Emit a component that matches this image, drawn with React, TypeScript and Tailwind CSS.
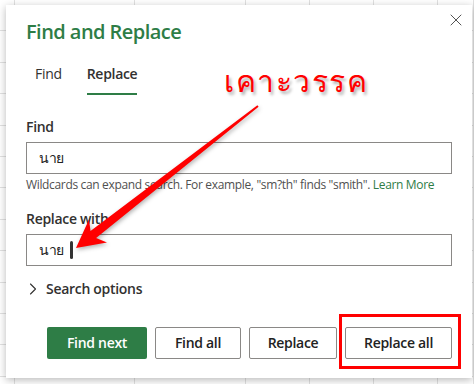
import { ChevronRight, X } from "lucide-react";

const cols = [15, 120, 111, 64, 64, 64, 36];

const Sheet = () => (
  <div className="absolute inset-0 flex bg-white bg-[repeating-linear-gradient(to_bottom,transparent_0,transparent_30.4px,#e1e1e1_30.4px,#e1e1e1_31.4px)]">
    {cols.map((w, i) => (
      <div key={i} className="h-full shrink-0 border-r border-[#e1e1e1]" style={{ width: w }} />
    ))}
  </div>
);

const Arrow = () => (
  <svg
    className="pointer-events-none absolute left-0 top-0 drop-shadow-[1px_2px_2px_rgba(0,0,0,0.3)]"
    width="474"
    height="384"
    viewBox="0 0 474 384"
  >
    <polygon
      points="258.6,106.8 96.1,238 107,242.5 76,248 89,219.5 90.5,231 257.4,105.2"
      fill="#ff0000"
    />
  </svg>
);

export default function App() {
  return (
    <div className="relative h-[384px] w-[474px] overflow-hidden font-['Open_Sans',sans-serif] tracking-[-0.3px]">
      <Sheet />

      <div className="absolute left-[6px] top-[5px] flex h-[373px] w-[466px] flex-col bg-white px-5 shadow-[0_2px_8px_rgba(0,0,0,0.28)]">
        <button className="absolute right-[6px] top-[5px] text-[#444]">
          <X className="h-5 w-5" strokeWidth={1.1} />
        </button>

        <div className="mt-[15px] flex h-6 items-center text-[20px] font-semibold tracking-[-0.55px] text-[#2e7d46]">
          Find and Replace
        </div>

        <div className="mt-[20px] flex gap-2 text-sm text-[#323130]">
          <div className="flex flex-col px-[9px]">
            <span className="h-5 leading-5">Find</span>
            <span className="mt-[9px] h-[2px]" />
          </div>
          <div className="flex flex-col px-[8px]">
            <span className="h-5 font-semibold leading-5">Replace</span>
            <span className="mt-[9px] h-[2px] bg-[#2e7d46]" />
          </div>
        </div>

        <div className="mt-[22px] h-5 text-sm font-semibold leading-5 text-[#323130]">Find</div>
        <div className="mt-[5px] flex h-8 items-center border border-[#8a8886] px-[12px] text-sm text-[#222]">
          นาย
        </div>
        <div className="mt-[3px] h-4 whitespace-nowrap text-xs leading-4 tracking-[-0.34px] text-[#505050]">
          Wildcards can expand search. For example, "sm?th" finds "smith".{" "}
          <span className="text-[#2e7d46]">Learn More</span>
        </div>

        <div className="mt-[16px] h-5 text-sm font-semibold leading-5 text-[#323130]">Replace with</div>
        <div className="mt-[5px] flex h-8 items-center border border-[#8a8886] px-[12px] text-sm text-[#222]">
          นาย
          <span className="ml-[6px] h-[18px] w-[3px] rounded-sm bg-[#333]" />
        </div>

        <div className="mt-[13px] -ml-[3px] flex h-5 items-center gap-[3px] text-sm font-semibold text-[#323130]">
          <ChevronRight className="h-5 w-5" strokeWidth={1.3} />
          <span>Search options</span>
        </div>

        <div className="mt-[28px] flex justify-end gap-2 text-sm font-semibold">
          <button className="h-8 w-[100px] rounded-[2px] bg-[#2e7d46] text-white">Find next</button>
          <button className="h-8 w-[86px] rounded-[2px] border border-[#8a8886] text-[#222]">Find all</button>
          <button className="h-8 w-[88px] rounded-[2px] border border-[#8a8886] text-[#222]">Replace</button>
          <div className="relative">
            <button className="h-8 w-[107px] rounded-[2px] border border-[#8a8886] text-[#222]">Replace all</button>
            <div className="pointer-events-none absolute -bottom-[10px] -left-[6px] -right-[9px] -top-[13px] border-[3px] border-[#ff0000]" />
          </div>
        </div>
      </div>

      <div className="absolute left-[224px] top-[58px] text-[30px] font-medium tracking-[1.5px] text-[#ff0000] [text-shadow:2px_3px_3px_rgba(0,0,0,0.3)]">
        เคาะวรรค
      </div>
      <Arrow />
    </div>
  );
}
